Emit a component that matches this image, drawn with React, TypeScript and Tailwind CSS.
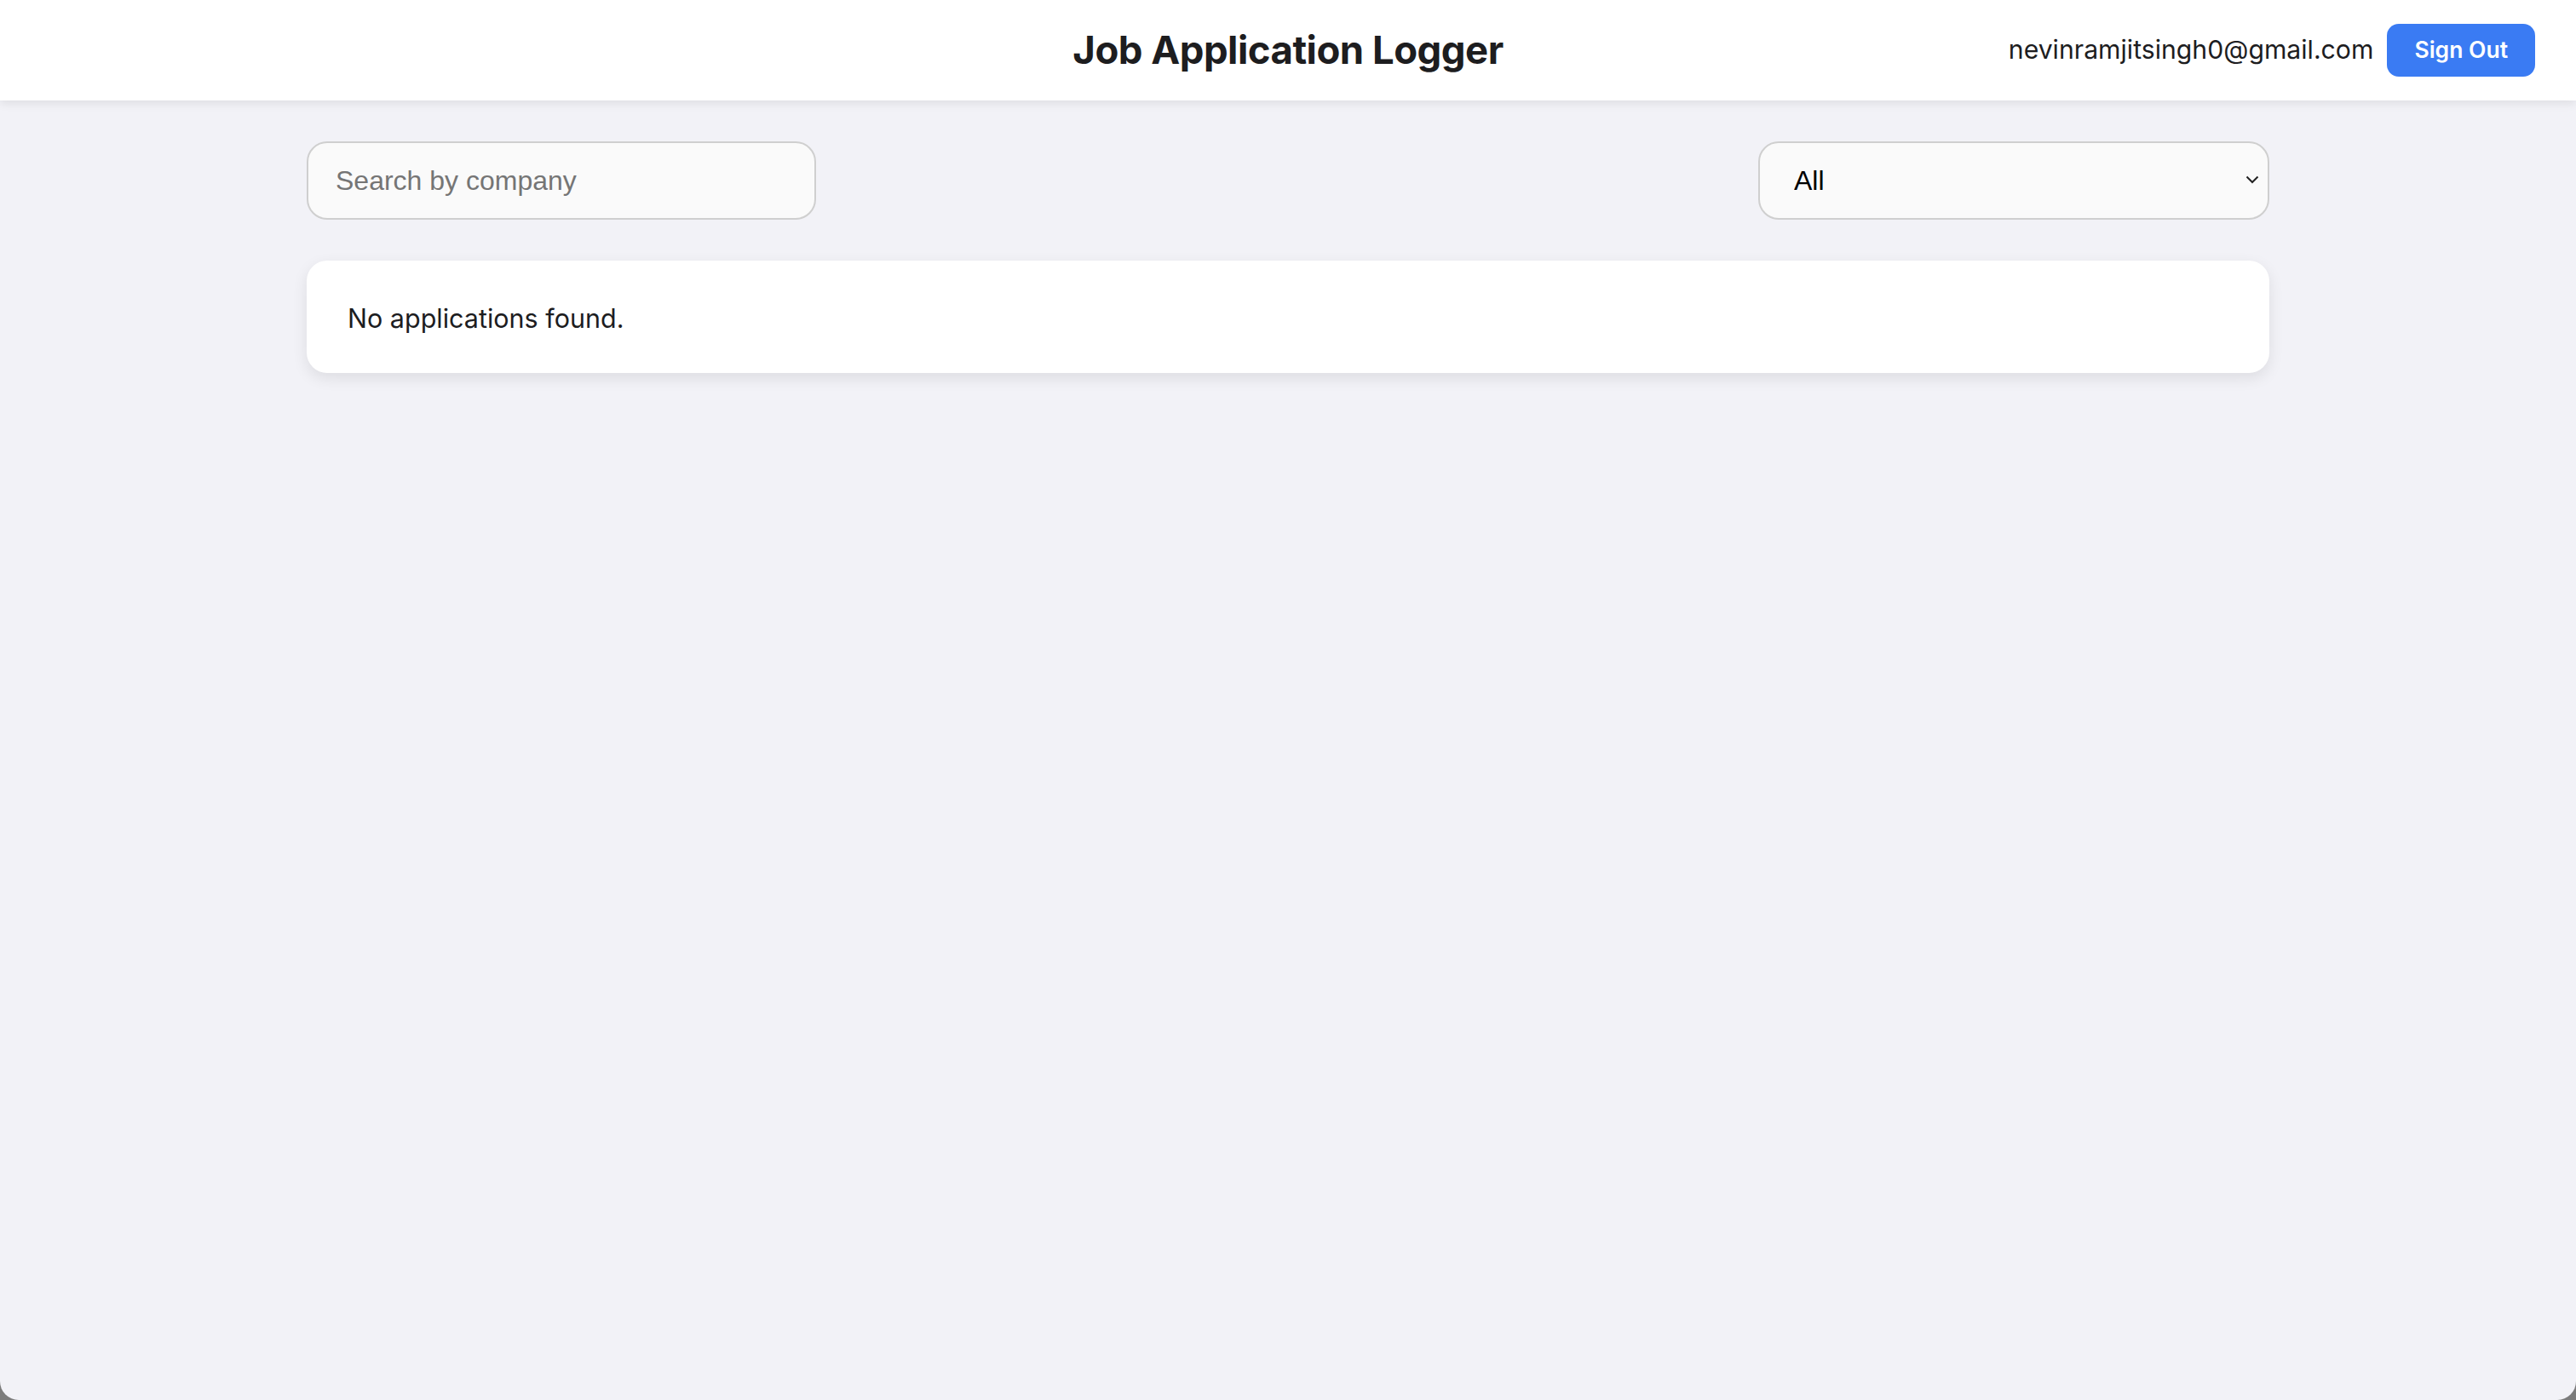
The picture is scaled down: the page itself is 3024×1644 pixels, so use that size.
import React from "react";

const Header = ({ email }: { email: string }) => (
  <header className="relative z-10 grid h-[118px] grid-cols-[1fr_auto_1fr] items-center bg-white px-[48px] shadow-[0_4px_10px_rgba(0,0,0,0.08)]">
    <div />
    <h1 className="font-['Inter',sans-serif] text-[45.5px] font-bold tracking-[-0.5px] text-[#1d1d1f]">
      Job Application Logger
    </h1>
    <div className="flex items-center justify-end gap-[16px]">
      <span className="font-['Inter',sans-serif] text-[30.2px] text-[#1d1d1f]">{email}</span>
      <button className="h-[62px] rounded-[14px] bg-[#3a7bf3] px-[32px] font-['Inter',sans-serif] text-[26.5px] font-semibold text-white">
        Sign Out
      </button>
    </div>
  </header>
);

const Filters = () => (
  <div className="flex items-center justify-between">
    <input
      type="text"
      placeholder="Search by company"
      className="h-[92px] w-[598px] rounded-[24px] border-2 border-[#cfcfcf] bg-[#fafafa] px-[32px] font-['Liberation_Sans',Arial,sans-serif] text-[32px] text-black placeholder:text-[#757575] outline-none"
    />
    <div className="relative">
      <select className="h-[92px] w-[600px] appearance-none rounded-[24px] border-2 border-[#cfcfcf] bg-[#fafafa] pl-[40px] pr-[48px] font-['Liberation_Sans',Arial,sans-serif] text-[32px] text-black outline-none">
        <option>All</option>
        <option>Applied</option>
        <option>Interviewing</option>
        <option>Offer</option>
        <option>Rejected</option>
      </select>
      <svg
        className="pointer-events-none absolute right-[12px] top-[40px]"
        width="16"
        height="10"
        viewBox="0 0 16 10"
        fill="none"
      >
        <path d="M1.5 1.5 L8 8 L14.5 1.5" stroke="#222" strokeWidth="2" />
      </svg>
    </div>
  </div>
);

export default function App() {
  return (
    <div className="h-screen overflow-hidden bg-[#7c7c7c]">
      <div className="flex h-full flex-col overflow-hidden rounded-b-[22px] bg-[#f2f2f7]">
        <Header email="nevinramjitsingh0@gmail.com" />
        <main className="mx-auto w-full max-w-[2304px] pt-[48px]">
          <Filters />
          <div className="mt-[48px] rounded-[24px] bg-white px-[48px] pt-[44px] pb-[40px] shadow-[0_6px_18px_rgba(0,0,0,0.09)]">
            <p className="font-['Inter',sans-serif] text-[30.5px] leading-[48px] text-[#1d1d1f]">
              No applications found.
            </p>
          </div>
        </main>
      </div>
    </div>
  );
}
